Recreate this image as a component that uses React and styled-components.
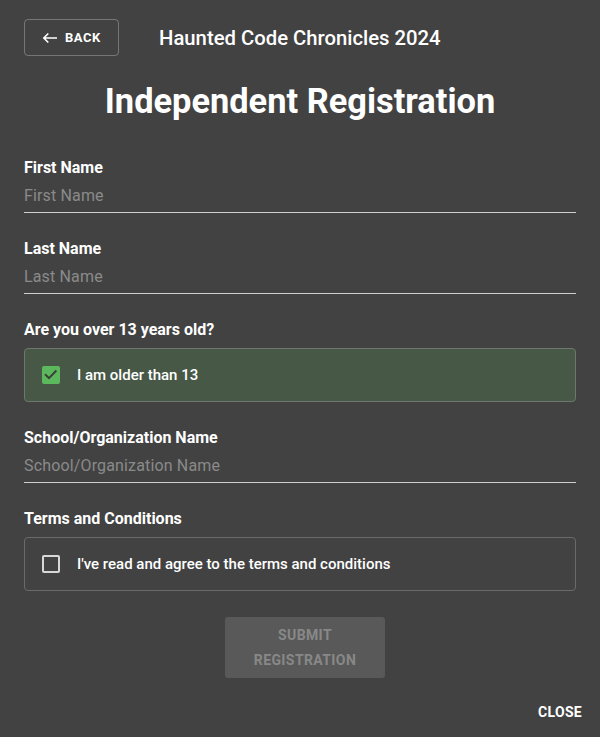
import React from 'react'
import styled, { createGlobalStyle } from 'styled-components'

const Global = createGlobalStyle`
    html, body {
        margin: 0;
        padding: 0;
        background: #424242;
    }
    body {
        font-family: Roboto, "Liberation Sans", sans-serif;
        color: #fff;
    }
`

const Page = styled.div`
    width: 600px;
    height: 737px;
    box-sizing: border-box;
    padding: 19px 24px 0;
    position: relative;
`

const TopBar = styled.div`
    display: flex;
    align-items: center;
    gap: 40px;
`

const BackButton = styled.button`
    display: flex;
    align-items: center;
    gap: 7px;
    height: 37px;
    width: 95px;
    box-sizing: border-box;
    padding: 0 0 0 17px;
    background: transparent;
    border: 1px solid rgba(255, 255, 255, 0.28);
    border-radius: 4px;
    color: #fff;
    font-family: Roboto, sans-serif;
    font-size: 13px;
    font-weight: 700;
    letter-spacing: 0.5px;
`

const EventTitle = styled.div`
    font-size: 20.3px;
    font-weight: 500;
`

const Heading = styled.h1`
    margin: 25px 0 0;
    text-align: center;
    font-size: 34.4px;
    line-height: 40px;
    font-weight: 700;
`

const Form = styled.div`
    margin-top: 37px;
    display: flex;
    flex-direction: column;
`

const Field = styled.div`
    display: flex;
    flex-direction: column;
    margin-bottom: ${p => p.$gap ?? 26}px;
`

const Label = styled.label`
    font-size: 16px;
    font-weight: 700;
    line-height: 20px;
`

const Input = styled.input`
    margin-top: 6px;
    background: transparent;
    border: none;
    border-bottom: 1px solid #cfcfcf;
    padding: 2px 0 7px;
    font-family: Roboto, sans-serif;
    font-size: 16px;
    letter-spacing: 0.15px;
    color: #fff;
    outline: none;
    &::placeholder {
        color: #8a8a8a;
    }
`

const CheckBox = styled.div`
    margin-top: 8px;
    height: 54px;
    box-sizing: border-box;
    border: 1px solid ${p => (p.$checked ? '#6e776e' : '#6a6a6a')};
    background: ${p => (p.$checked ? '#475847' : 'transparent')};
    border-radius: 4px;
    display: flex;
    align-items: center;
    padding-left: 17px;
    gap: 17px;
    font-size: 15px;
    font-weight: 500;
`

const Box = styled.span`
    width: 18px;
    height: 18px;
    box-sizing: border-box;
    border-radius: 2px;
    display: flex;
    align-items: center;
    justify-content: center;
    background: ${p => (p.$checked ? '#5cb85c' : 'transparent')};
    border: ${p => (p.$checked ? 'none' : '2px solid #d8d8d8')};
`

const SubmitRow = styled.div`
    display: flex;
    justify-content: center;
    padding-left: 10px;
    margin-top: 26px;
`

const SubmitButton = styled.button`
    width: 160px;
    height: 61px;
    background: #595959;
    border: none;
    border-radius: 3px;
    color: #888;
    font-family: Roboto, sans-serif;
    font-size: 14px;
    font-weight: 700;
    line-height: 25px;
    letter-spacing: 0.4px;
`

const CloseButton = styled.button`
    position: absolute;
    right: 18px;
    bottom: 17px;
    background: transparent;
    border: none;
    color: #fff;
    font-family: Roboto, sans-serif;
    font-size: 14px;
    font-weight: 700;
    letter-spacing: 0.3px;
    padding: 0;
`

function Check({ checked, children }) {
    return (
        <CheckBox $checked={checked}>
            <Box $checked={checked}>
                {checked && (
                    <svg width="18" height="18" viewBox="0 0 18 18">
                        <path d="M3 8.3l4 3.9L14.4 4.5" fill="none" stroke="#3a3f3a" strokeWidth="2" />
                    </svg>
                )}
            </Box>
            {children}
        </CheckBox>
    )
}

export default function App() {
    return (
        <Page>
            <Global />
            <TopBar>
                <BackButton>
                    <svg width="16" height="12" viewBox="0 0 16 12">
                        <path d="M15 6H1.8M6.3 1.5L1.8 6l4.5 4.5" fill="none" stroke="#fff" strokeWidth="1.6" />
                    </svg>
                    BACK
                </BackButton>
                <EventTitle>Haunted Code Chronicles 2024</EventTitle>
            </TopBar>

            <Heading>Independent Registration</Heading>

            <Form>
                <Field>
                    <Label>First Name</Label>
                    <Input placeholder="First Name" />
                </Field>
                <Field>
                    <Label>Last Name</Label>
                    <Input placeholder="Last Name" />
                </Field>
                <Field>
                    <Label>Are you over 13 years old?</Label>
                    <Check checked>I am older than 13</Check>
                </Field>
                <Field>
                    <Label>School/Organization Name</Label>
                    <Input placeholder="School/Organization Name" />
                </Field>
                <Field $gap={0}>
                    <Label>Terms and Conditions</Label>
                    <Check>I've read and agree to the terms and conditions</Check>
                </Field>
            </Form>

            <SubmitRow>
                <SubmitButton disabled>
                    SUBMIT
                    <br />
                    REGISTRATION
                </SubmitButton>
            </SubmitRow>

            <CloseButton>CLOSE</CloseButton>
        </Page>
    )
}
